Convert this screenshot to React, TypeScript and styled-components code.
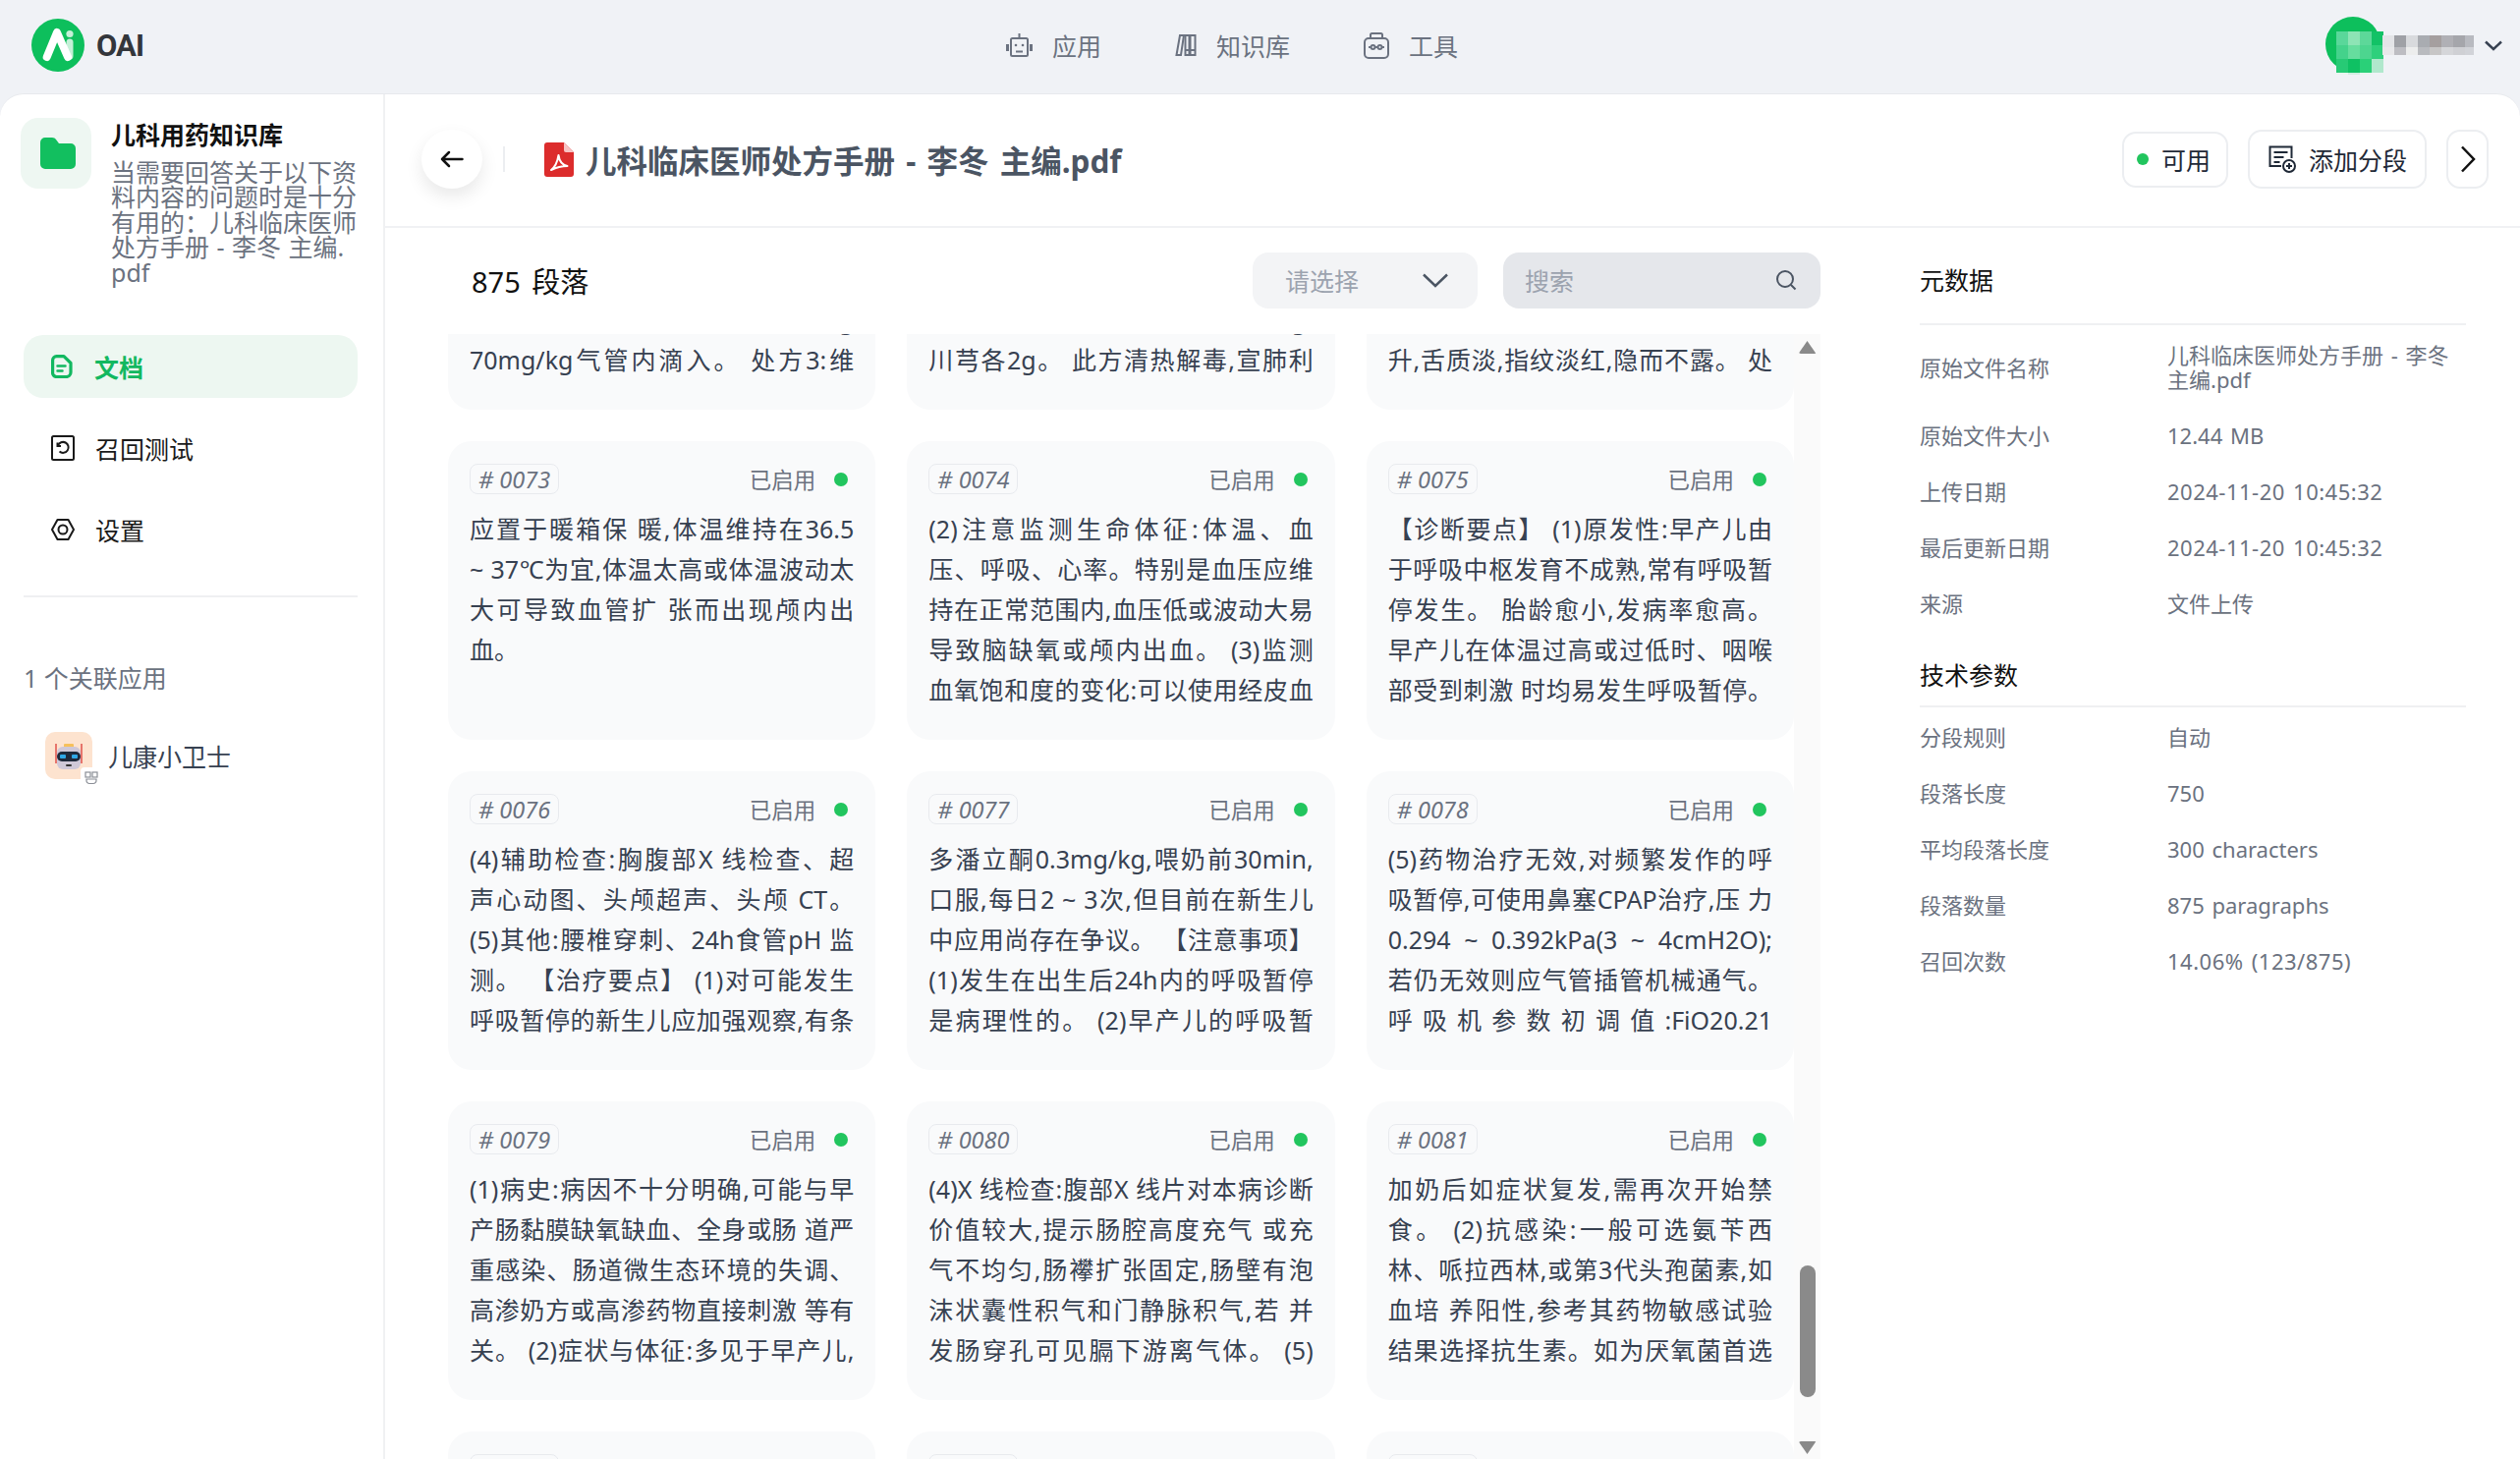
import styled, { createGlobalStyle } from "styled-components";

const fontStack = `"Noto Sans", "Noto Sans CJK SC", sans-serif`;

const GlobalStyle = createGlobalStyle`
  * { box-sizing: border-box; }
  html, body { margin: 0; padding: 0; height: 100%; }
  body {
    background: #f0f2f6;
    font-family: ${fontStack};
    color: #111827;
    overflow: hidden;
  }
`;

interface Segment {
  id: string;
  lines: string[];
}

const segments: Segment[] = [
  { id: "0070", lines: ["新生儿窒息复苏后,可给予肺表面", "活性物质治疗。 处方1:猪肺磷脂", "注射液100~200mg/kg气管内滴", "入。 处方2:牛肺表面活性剂,按g", "70mg/kg气管内滴入。 处方3:维"] },
  { id: "0071", lines: ["麻杏石甘汤加减:麻黄3g,杏仁6g", "生石膏15g,甘草3g,金银花10g,", "连翘10g,黄芩6g,桑白皮6g,", "前胡,桔梗,赤芍6丹参g,", "川芎各2g。 此方清热解毒,宣肺利"] },
  { id: "0072", lines: ["患儿咳嗽气促,喉中痰鸣,面色苍", "白,口唇发绀,四肢欠温,精神萎", "靡,哭声低微,吮乳无力,腹胀便", "溏,小便清长,舌淡苔白,指纹淡", "升,舌质淡,指纹淡红,隐而不露。 处"] },
  { id: "0073", lines: ["应置于暖箱保 暖,体温维持在36.5", "~ 37℃为宜,体温太高或体温波动太", "大可导致血管扩 张而出现颅内出", "血。"] },
  { id: "0074", lines: ["(2)注意监测生命体征:体温、血", "压、呼吸、心率。特别是血压应维", "持在正常范围内,血压低或波动大易", "导致脑缺氧或颅内出血。 (3)监测", "血氧饱和度的变化:可以使用经皮血"] },
  { id: "0075", lines: ["【诊断要点】 (1)原发性:早产儿由", "于呼吸中枢发育不成熟,常有呼吸暂", "停发生。 胎龄愈小,发病率愈高。", "早产儿在体温过高或过低时、咽喉", "部受到刺激 时均易发生呼吸暂停。"] },
  { id: "0076", lines: ["(4)辅助检查:胸腹部X 线检查、超", "声心动图、头颅超声、头颅 CT。", "(5)其他:腰椎穿刺、24h食管pH 监", "测。 【治疗要点】 (1)对可能发生", "呼吸暂停的新生儿应加强观察,有条"] },
  { id: "0077", lines: ["多潘立酮0.3mg/kg,喂奶前30min,", "口服,每日2 ~ 3次,但目前在新生儿", "中应用尚存在争议。 【注意事项】", "(1)发生在出生后24h内的呼吸暂停", "是病理性的。 (2)早产儿的呼吸暂"] },
  { id: "0078", lines: ["(5)药物治疗无效,对频繁发作的呼", "吸暂停,可使用鼻塞CPAP治疗,压 力", "0.294 ~ 0.392kPa(3 ~ 4cmH2O);", "若仍无效则应气管插管机械通气。", "呼 吸 机 参 数 初 调 值 :FiO20.21"] },
  { id: "0079", lines: ["(1)病史:病因不十分明确,可能与早", "产肠黏膜缺氧缺血、全身或肠 道严", "重感染、肠道微生态环境的失调、", "高渗奶方或高渗药物直接刺激 等有", "关。 (2)症状与体征:多见于早产儿,"] },
  { id: "0080", lines: ["(4)X 线检查:腹部X 线片对本病诊断", "价值较大,提示肠腔高度充气 或充", "气不均匀,肠襻扩张固定,肠壁有泡", "沫状囊性积气和门静脉积气,若 并", "发肠穿孔可见膈下游离气体。 (5)"] },
  { id: "0081", lines: ["加奶后如症状复发,需再次开始禁", "食。 (2)抗感染:一般可选氨苄西", "林、哌拉西林,或第3代头孢菌素,如", "血培 养阳性,参考其药物敏感试验", "结果选择抗生素。如为厌氧菌首选"] },
  { id: "0082", lines: [] },
  { id: "0083", lines: [] },
  { id: "0084", lines: [] },
];

const metadata = [
  { label: "原始文件名称", value: "儿科临床医师处方手册 - 李冬 主编.pdf" },
  { label: "原始文件大小", value: "12.44 MB" },
  { label: "上传日期", value: "2024-11-20 10:45:32", wide: true },
  { label: "最后更新日期", value: "2024-11-20 10:45:32", wide: true },
  { label: "来源", value: "文件上传" },
];

const technical = [
  { label: "分段规则", value: "自动" },
  { label: "段落长度", value: "750" },
  { label: "平均段落长度", value: "300 characters" },
  { label: "段落数量", value: "875 paragraphs" },
  { label: "召回次数", value: "14.06% (123/875)", wide: true },
];

const avatarBlocks = [
  ["#5ad79a", "#8de4b5", "#5dd899", "#12c266"],
  ["#44d28b", "#66dd9e", "#4dd58f", "#2ed07c"],
  ["#27ca75", "#0fc163", "#2ad078", "#b0e8cc"],
  ["#e8f5ef", "#cfeee0", "#e8f5ef", "#f0f2f6"],
];
const nameBlocks = [
  ["#e3e4e7", "#9fa1a6", "#d8dadd", "#a9acb1", "#a59f9f", "#b0b0b5", "#a5a6ab", "#b8bac0"],
  ["#e8e8ea", "#bdbdc2", "#eceded", "#b9bbbf", "#c7c6c6", "#d5d6d9", "#cfd0d4", "#d1d3d8"],
];

const Page = styled.div`
  display: flex;
  flex-direction: column;
  height: 100vh;
  overflow: hidden;
`;

const TopBar = styled.header`
  display: flex;
  align-items: center;
  justify-content: space-between;
  height: 95px;
  flex-shrink: 0;
  padding: 0 18px 3px 32px;
`;

const Brand = styled.div`
  display: flex;
  align-items: center;
  gap: 12px;
`;

const BrandName = styled.span`
  font-family: Roboto, sans-serif;
  font-weight: 700;
  font-size: 31px;
  letter-spacing: -1px;
  color: #33363b;
`;

const Nav = styled.nav`
  display: flex;
  align-items: center;
  gap: 75px;
  margin-right: 4px;
`;

const NavItem = styled.div`
  display: flex;
  align-items: center;
  gap: 20px;
  font-size: 25px;
  color: #6b7280;
`;

const UserMenu = styled.div`
  display: flex;
  align-items: center;
  gap: 11px;
`;

const Body = styled.div`
  flex: 1;
  min-height: 0;
  display: flex;
  background: #fff;
  border-top: 1px solid #e7e9ed;
  border-radius: 24px 24px 0 0;
  overflow: hidden;
`;

const Sidebar = styled.aside`
  width: 392px;
  flex-shrink: 0;
  border-right: 2px solid #f0f1f3;
  padding: 24px 26px 0 24px;
`;

const DatasetHead = styled.div`
  display: flex;
  gap: 20px;
  margin-left: -3px;
  height: 170px;
`;

const DatasetIcon = styled.div`
  width: 72px;
  height: 72px;
  flex-shrink: 0;
  display: flex;
  align-items: center;
  justify-content: center;
  padding-left: 4px;
  border-radius: 18px;
  background: #eef7f2;
`;

const DatasetText = styled.div`
  width: 256px;
  flex-shrink: 0;
`;

const DatasetTitle = styled.div`
  font-size: 25px;
  line-height: 34px;
  font-weight: 700;
  color: #111;
  margin-bottom: 9px;
  white-space: nowrap;
`;

const DatasetDesc = styled.div`
  font-size: 25px;
  line-height: 25.4px;
  color: #6b7280;
  word-spacing: 1px;
`;

const Menu = styled.div`
  display: flex;
  flex-direction: column;
  gap: 19px;
  margin-top: 51px;
`;

const MenuItem = styled.div<{ $active?: boolean }>`
  display: flex;
  align-items: center;
  gap: ${(p) => (p.$active ? "20px" : "21px")};
  height: 64px;
  padding-left: 28px;
  border-radius: 20px;
  font-size: 25px;
  font-weight: ${(p) => (p.$active ? 700 : 400)};
  color: ${(p) => (p.$active ? "#12b860" : "#1a1a1a")};
  background: ${(p) => (p.$active ? "#edf7f1" : "transparent")};
`;

const SideDivider = styled.div`
  height: 2px;
  background: #eff0f2;
  margin-top: 35px;
`;

const LinkedLabel = styled.div`
  margin-top: 65px;
  font-size: 25px;
  line-height: 34px;
  color: #6b7280;
`;

const LinkedApp = styled.div`
  display: flex;
  align-items: center;
  gap: 16px;
  margin-top: 38px;
  padding-left: 22px;
  font-size: 25px;
  color: #374151;
`;

const AppIcon = styled.div`
  position: relative;
  width: 48px;
  height: 48px;
  border-radius: 10px;
  background: #fde3cf;
`;

const AppBadge = styled.div`
  position: absolute;
  right: -10px;
  bottom: -10px;
  width: 22px;
  height: 22px;
  border-radius: 4px;
  background: #fff;
  display: flex;
  align-items: center;
  justify-content: center;
`;

const Main = styled.main`
  flex: 1;
  min-width: 0;
  display: flex;
  flex-direction: column;
`;

const DocHeader = styled.div`
  display: flex;
  align-items: center;
  flex-shrink: 0;
  height: 136px;
  padding: 0 32px 2px 37px;
  border-bottom: 2px solid #f0f1f4;
`;

const BackButton = styled.button`
  width: 62px;
  height: 60px;
  padding: 0;
  border: 0;
  border-radius: 50%;
  background: #fff;
  display: flex;
  align-items: center;
  justify-content: center;
  box-shadow: 0 8px 18px rgba(0, 0, 0, 0.09);
`;

const VLine = styled.div`
  width: 2px;
  height: 26px;
  background: #eceef1;
  margin: 0 40px 0 21px;
`;

const DocTitle = styled.h1`
  margin: 0 auto 0 12px;
  font-size: 31.5px;
  font-weight: 700;
  word-spacing: 3px;
  color: #4b5563;
  white-space: nowrap;
`;

const HeaderActions = styled.div`
  display: flex;
  align-items: center;
  gap: 20px;
`;

const ActionButton = styled.div<{ $compact?: boolean }>`
  display: flex;
  align-items: center;
  justify-content: center;
  gap: 13px;
  height: ${(p) => (p.$compact ? "57px" : "60px")};
  padding: 0 ${(p) => (p.$compact ? "16px" : "18px")} 0 ${(p) => (p.$compact ? "13px" : "19px")};
  border: 2px solid #eceef1;
  border-radius: 14px;
  font-size: 25px;
  color: #1f2937;
  background: #fff;
`;

const IconButton = styled(ActionButton)`
  width: 43px;
  padding: 0;
`;

const StatusDot = styled.span<{ $size: number }>`
  width: ${(p) => p.$size}px;
  height: ${(p) => p.$size}px;
  border-radius: 50%;
  background: #22c55e;
  flex-shrink: 0;
`;

const Content = styled.div`
  flex: 1;
  min-height: 0;
  display: flex;
`;

const SegmentsColumn = styled.section`
  width: 1397px;
  flex-shrink: 0;
  margin-left: 64px;
  display: flex;
  flex-direction: column;
`;

const Toolbar = styled.div`
  display: flex;
  align-items: center;
  flex-shrink: 0;
  height: 108px;
  padding: 0 0 2px 24px;
  gap: 26px;
`;

const SegmentCount = styled.div`
  margin-right: auto;
  font-size: 29px;
  word-spacing: 4px;
  color: #111;
`;

const SelectBox = styled.div`
  width: 229px;
  height: 57px;
  display: flex;
  align-items: center;
  justify-content: space-between;
  padding: 0 30px 0 33px;
  border-radius: 16px;
  background: #f3f4f6;
  font-size: 25px;
  color: #9ca3af;
`;

const SearchBox = styled.div`
  width: 323px;
  height: 57px;
  display: flex;
  align-items: center;
  justify-content: space-between;
  padding: 0 24px 0 22px;
  border-radius: 16px;
  background: #e5e7eb;
  font-size: 25px;
  color: #9ca3af;
`;

const ScrollArea = styled.div`
  flex: 1;
  min-height: 0;
  display: flex;
`;

const Viewport = styled.div`
  flex: 1;
  min-width: 0;
  overflow: hidden;
`;

const CardGrid = styled.div`
  display: grid;
  grid-template-columns: repeat(3, 1fr);
  gap: 32px;
  margin-top: -227px;
`;

const Card = styled.article`
  height: 304px;
  padding: 23px 22px 0;
  border-radius: 24px;
  background: #f9fafb;
  overflow: hidden;
`;

const CardHead = styled.div`
  display: flex;
  align-items: center;
  height: 31px;
  margin-bottom: 15px;
  padding-right: 6px;
`;

const SegTag = styled.span`
  display: flex;
  align-items: center;
  height: 31px;
  padding: 0 8px;
  margin-right: auto;
  border: 1px solid #e8eaee;
  border-radius: 8px;
  font-size: 23.5px;
  font-style: italic;
  color: #6b7280;
`;

const EnabledText = styled.span`
  font-size: 22.5px;
  color: #6b7280;
  margin-right: 19px;
`;

const CardText = styled.div`
  height: 205px;
  overflow: hidden;
  font-size: 25px;
  line-height: 41px;
  color: #374151;
`;

const CardLine = styled.div<{ $short?: boolean }>`
  height: 41px;
  text-align: justify;
  text-align-last: ${(p) => (p.$short ? "left" : "justify")};
`;

const ScrollTrack = styled.div`
  width: 27px;
  flex-shrink: 0;
  display: flex;
  flex-direction: column;
  align-items: center;
  padding: 7px 0 5px;
  background: #fafafa;
`;

const ScrollArrow = styled.div<{ $down?: boolean }>`
  width: 18px;
  height: 13px;
  background: #8a8a8a;
  border-radius: 2px;
  clip-path: ${(p) =>
    p.$down ? "polygon(0 0, 100% 0, 50% 100%)" : "polygon(50% 0, 100% 100%, 0 100%)"};
`;

const ScrollThumb = styled.div`
  width: 16px;
  height: 134px;
  margin-top: auto;
  margin-bottom: 45px;
  border-radius: 8px;
  background: #8a8a8a;
`;

const MetaPanel = styled.aside`
  width: 556px;
  flex-shrink: 0;
  margin-left: 101px;
  padding-top: 35px;
`;

const MetaTitle = styled.h3<{ $spaced?: boolean }>`
  margin: ${(p) => (p.$spaced ? "26px" : "0")} 0 2px;
  padding-bottom: ${(p) => (p.$spaced ? "13px" : "26px")};
  border-bottom: 2px solid #eff0f2;
  font-size: 25px;
  line-height: 36px;
  font-weight: 400;
  color: #111;
`;

const MetaRow = styled.div`
  display: grid;
  grid-template-columns: 252px 1fr;
  align-items: center;
  padding: 16px 0;
  font-size: 22px;
  line-height: 25px;
  color: #6b7280;
`;

const MetaValue = styled.span<{ $wide?: boolean }>`
  letter-spacing: ${(p) => (p.$wide ? "0.5px" : "0")};
  word-spacing: 2px;
`;

function LogoMark() {
  return (
    <svg width="54" height="54" viewBox="0 0 54 54">
      <circle cx="27" cy="27" r="27" fill="#0dbf5c" />
      <path d="M39 24v14" stroke="#c5f0d8" strokeWidth="7" strokeLinecap="round" />
      <circle cx="39" cy="15.5" r="3.6" fill="#c5f0d8" />
      <path d="M15.7 39L26 14l11 25" fill="none" stroke="#fff" strokeWidth="8" strokeLinecap="round" strokeLinejoin="round" />
    </svg>
  );
}

function RobotNavIcon() {
  return (
    <svg width="27" height="27" viewBox="0 0 27 27" fill="none" stroke="#6b7280" strokeWidth="2">
      <path d="M13.5 1v5" />
      <rect x="5" y="6" width="17" height="18" rx="1.5" />
      <path d="M1.5 12v7M25.500 12v7" strokeWidth="3" />
      <path d="M10 19.500h7" />
      <circle cx="10" cy="13" r="1.300" fill="#6b7280" stroke="none" />
      <circle cx="17" cy="13" r="1.300" fill="#6b7280" stroke="none" />
    </svg>
  );
}

function BooksNavIcon() {
  return (
    <svg width="22" height="24" viewBox="0 0 22 24" fill="none" stroke="#6b7280" strokeWidth="2">
      <path d="M5 2h4L6 22H1.500z" />
      <path d="M10.500 2h4v20h-4zM15.500 2H20.500v20h-5z" />
      <path d="M10.500 17h10" />
    </svg>
  );
}

function ToolboxNavIcon() {
  return (
    <svg width="26" height="28" viewBox="0 0 26 28" fill="none" stroke="#6b7280" strokeWidth="2">
      <rect x="1" y="7" width="24" height="20" rx="4" />
      <path d="M7 7V3.500A1.500 1.500 0 0 1 8.500 2h9A1.500 1.500 0 0 1 19 3.500V7" />
      <circle cx="9.500" cy="16" r="2" />
      <circle cx="16.500" cy="16" r="2" />
      <path d="M5 16h2.500M11.500 16h3M18.500 16H21" />
    </svg>
  );
}

function MosaicUser() {
  return (
    <svg width="152" height="59" viewBox="0 0 152 59">
      <circle cx="29" cy="28" r="28" fill="#0dbf5c" />
      {avatarBlocks.map((row, r) =>
        row.map((color, c) => (
          <rect key={`a${r}-${c}`} x={12 + c * 12} y={15 + r * 14} width="12" height={r === 3 ? 4 : 14} fill={color} />
        ))
      )}
      {nameBlocks.map((row, r) =>
        row.map((color, c) => (
          <rect key={`n${r}-${c}`} x={59 + c * 12} y={19 + r * 12} width="12" height={r === 1 ? 8 : 12} fill={color} />
        ))
      )}
    </svg>
  );
}

function Chevron({ size, height, color, width = 2.500 }: { size: number; height: number; color: string; width?: number }) {
  return (
    <svg width={size} height={height} viewBox={`0 0 ${size} ${height}`} fill="none" stroke={color} strokeWidth={width}>
      <path d={`M1 1.500L${size / 2} ${height - 2}L${size - 1} 1.500`} />
    </svg>
  );
}

function FolderIcon() {
  return (
    <svg width="36" height="32" viewBox="0 0 36 32">
      <path d="M5 0h7c1.800 0 3.200.8 4.200 2.200L19 6h12a5 5 0 0 1 5 5v16a5 5 0 0 1-5 5H5a5 5 0 0 1-5-5V5a5 5 0 0 1 5-5z" fill="#12bf5f" />
    </svg>
  );
}

function DocMenuIcon() {
  return (
    <svg width="24" height="24" viewBox="0 0 24 24" fill="none" stroke="#12b860" strokeWidth="3.200" strokeLinejoin="round">
      <path d="M5.500 1.600h7.500L20 8.500V18a4.500 4.500 0 0 1-4.500 4.500h-10A4 4 0 0 1 1.600 18V5.500A4 4 0 0 1 5.500 1.600z" />
      <path d="M6.500 11.500h8M6.500 16.500h5" strokeWidth="2.500" strokeLinecap="round" />
    </svg>
  );
}

function RetrievalIcon() {
  return (
    <svg width="24" height="26" viewBox="0 0 24 26" fill="none" stroke="#1a1a1a" strokeWidth="2">
      <rect x="1" y="1" width="22" height="24" rx="1.500" />
      <path d="M7 10.500a5.500 5.500 0 1 1 1.500 6" />
      <path d="M6.500 7.500v3.500h3.500" />
    </svg>
  );
}

function HexagonIcon() {
  return (
    <svg width="24" height="24" viewBox="0 0 24 24" fill="none" stroke="#1a1a1a" strokeWidth="2" strokeLinejoin="round">
      <path d="M6.500 2h11L23 12l-5.500 10h-11L1 12z" />
      <circle cx="12" cy="12" r="4.500" />
    </svg>
  );
}

function RobotAvatar() {
  return (
    <svg width="48" height="48" viewBox="0 0 48 48">
      <path d="M11 12v20M37 12v20" stroke="#e0524c" strokeWidth="1.500" />
      <rect x="19" y="12" width="10" height="4" rx="1" fill="#f6c05c" />
      <rect x="12" y="15" width="24" height="23" rx="6" fill="#cfc8d8" />
      <rect x="12" y="20" width="24" height="10" rx="5" fill="#1f2a3c" />
      <rect x="15" y="23" width="6" height="4" rx="1" fill="#2fa8e6" />
      <rect x="27" y="23" width="6" height="4" rx="1" fill="#2fa8e6" />
      <rect x="21" y="33" width="6" height="2" rx="1" fill="#333" />
    </svg>
  );
}

function BadgeBotIcon() {
  return (
    <svg width="14" height="14" viewBox="0 0 14 14" fill="none" stroke="#8b8f97" strokeWidth="1.200">
      <rect x="1" y="1" width="5" height="5" />
      <rect x="8" y="1" width="5" height="5" />
      <path d="M2 8h10v1.500a3 3 0 0 1-3 3H5a3 3 0 0 1-3-3z" />
    </svg>
  );
}

function BackArrow() {
  return (
    <svg width="24" height="18" viewBox="0 0 24 18" fill="none" stroke="#111" strokeWidth="2.500" strokeLinecap="round" strokeLinejoin="round">
      <path d="M22.500 9H2M9 2L2 9l7 7" />
    </svg>
  );
}

function PdfIcon() {
  return (
    <svg width="30" height="35" viewBox="0 0 30 35">
      <path d="M3 0h17l10 10v22a3 3 0 0 1-3 3H3a3 3 0 0 1-3-3V3a3 3 0 0 1 3-3z" fill="#dc2c2c" />
      <path d="M20 0v8a2 2 0 0 0 2 2h8z" fill="#f7c3c3" />
      <path d="M7 28c4-3 6.500-9 7.500-15 .8 6 4 10 9 11-5.500 0-10.500 1-16.500 4z" fill="none" stroke="#fff" strokeWidth="2" strokeLinejoin="round" />
    </svg>
  );
}

function AddSegmentIcon() {
  return (
    <svg width="28" height="28" viewBox="0 0 28 28" fill="none" stroke="#1f2937" strokeWidth="2">
      <path d="M13 21H1.500V1.500h22V13" />
      <path d="M5.500 7h14M5.500 12h10M5.500 17h6" />
      <circle cx="21" cy="21" r="6" />
      <path d="M21 18v6M18 21h6" />
    </svg>
  );
}

function ChevronRightIcon() {
  return (
    <svg width="16" height="28" viewBox="0 0 16 28" fill="none" stroke="#111" strokeWidth="2.500">
      <path d="M2 1.500L14 14 2 26.500" />
    </svg>
  );
}

function SearchIcon() {
  return (
    <svg width="22" height="22" viewBox="0 0 22 22" fill="none" stroke="#4b5563" strokeWidth="2">
      <circle cx="10" cy="10" r="8" />
      <path d="M16 16l4.500 4.500" />
    </svg>
  );
}

function MetaGroup({ rows }: { rows: { label: string; value: string; wide?: boolean }[] }) {
  return (
    <>
      {rows.map((row) => (
        <MetaRow key={row.label}>
          <span>{row.label}</span>
          <MetaValue $wide={row.wide}>{row.value}</MetaValue>
        </MetaRow>
      ))}
    </>
  );
}

export default function App() {
  return (
    <Page>
      <GlobalStyle />
      <TopBar>
        <Brand>
          <LogoMark />
          <BrandName>OAI</BrandName>
        </Brand>
        <Nav>
          <NavItem>
            <RobotNavIcon />
            应用
          </NavItem>
          <NavItem>
            <BooksNavIcon />
            知识库
          </NavItem>
          <NavItem>
            <ToolboxNavIcon />
            工具
          </NavItem>
        </Nav>
        <UserMenu>
          <MosaicUser />
          <Chevron size={18} height={11} color="#374151" />
        </UserMenu>
      </TopBar>
      <Body>
        <Sidebar>
          <DatasetHead>
            <DatasetIcon>
              <FolderIcon />
            </DatasetIcon>
            <DatasetText>
              <DatasetTitle>儿科用药知识库</DatasetTitle>
              <DatasetDesc>
                当需要回答关于以下资料内容的问题时是十分有用的：儿科临床医师处方手册 - 李冬 主编.
                <br />
                pdf
              </DatasetDesc>
            </DatasetText>
          </DatasetHead>
          <Menu>
            <MenuItem $active>
              <DocMenuIcon />
              文档
            </MenuItem>
            <MenuItem>
              <RetrievalIcon />
              召回测试
            </MenuItem>
            <MenuItem>
              <HexagonIcon />
              设置
            </MenuItem>
          </Menu>
          <SideDivider />
          <LinkedLabel>1 个关联应用</LinkedLabel>
          <LinkedApp>
            <AppIcon>
              <RobotAvatar />
              <AppBadge>
                <BadgeBotIcon />
              </AppBadge>
            </AppIcon>
            儿康小卫士
          </LinkedApp>
        </Sidebar>
        <Main>
          <DocHeader>
            <BackButton>
              <BackArrow />
            </BackButton>
            <VLine />
            <PdfIcon />
            <DocTitle>儿科临床医师处方手册 - 李冬 主编.pdf</DocTitle>
            <HeaderActions>
              <ActionButton $compact>
                <StatusDot $size={12} />
                可用
              </ActionButton>
              <ActionButton>
                <AddSegmentIcon />
                添加分段
              </ActionButton>
              <IconButton>
                <ChevronRightIcon />
              </IconButton>
            </HeaderActions>
          </DocHeader>
          <Content>
            <SegmentsColumn>
              <Toolbar>
                <SegmentCount>875 段落</SegmentCount>
                <SelectBox>
                  请选择
                  <Chevron size={26} height={15} color="#4b5563" />
                </SelectBox>
                <SearchBox>
                  搜索
                  <SearchIcon />
                </SearchBox>
              </Toolbar>
              <ScrollArea>
                <Viewport>
                  <CardGrid>
                    {segments.map((segment) => (
                      <Card key={segment.id}>
                        <CardHead>
                          <SegTag># {segment.id}</SegTag>
                          <EnabledText>已启用</EnabledText>
                          <StatusDot $size={14} />
                        </CardHead>
                        <CardText>
                          {segment.lines.map((line, i) => (
                            <CardLine key={i} $short={segment.lines.length < 5 && i === segment.lines.length - 1}>
                              {line}
                            </CardLine>
                          ))}
                        </CardText>
                      </Card>
                    ))}
                  </CardGrid>
                </Viewport>
                <ScrollTrack>
                  <ScrollArrow />
                  <ScrollThumb />
                  <ScrollArrow $down />
                </ScrollTrack>
              </ScrollArea>
            </SegmentsColumn>
            <MetaPanel>
              <MetaTitle>元数据</MetaTitle>
              <MetaGroup rows={metadata} />
              <MetaTitle $spaced>技术参数</MetaTitle>
              <MetaGroup rows={technical} />
            </MetaPanel>
          </Content>
        </Main>
      </Body>
    </Page>
  );
}
